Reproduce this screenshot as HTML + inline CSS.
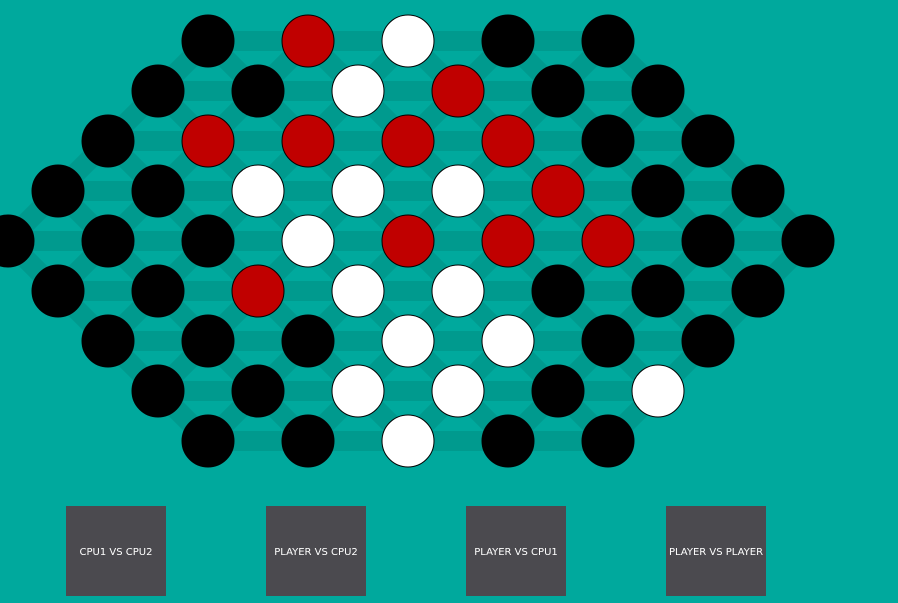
<!DOCTYPE html>
<html><head><meta charset="utf-8"><style>
html,body{margin:0;padding:0;width:898px;height:603px;overflow:hidden;background:#00a99d;font-family:"DejaVu Sans","Liberation Sans",sans-serif}
svg{position:absolute;left:0;top:0}
.b{position:absolute;top:506px;width:100px;height:90px;background:#4b4a4f;color:#fff;font-size:10px;display:flex;align-items:center;justify-content:center;white-space:nowrap;padding-top:2px;box-sizing:border-box}
</style></head><body>
<svg id="s" width="898" height="603"></svg>
<div class="b" style="left:66px">CPU1 VS CPU2</div>
<div class="b" style="left:266px">PLAYER VS CPU2</div>
<div class="b" style="left:466px">PLAYER VS CPU1</div>
<div class="b" style="left:666px">PLAYER VS PLAYER</div>
<script>
var rows=["BRWBB","BBWRBB","BRRRRBB","BBWWWRBB","BBBWRRRBB","BBRWWBBB","BBBWWBB","BBWWBW","BBWBB"];
var cells=[];
rows.forEach(function(r,i){var n=r.length,x0=208-(n-5)*50;for(var j=0;j<n;j++)cells.push({x:x0+j*100,y:41+i*50,c:r[j]});});
var s=document.getElementById("s");
var key={};cells.forEach(function(c){key[c.x+","+c.y]=1;});
var lines="";
cells.forEach(function(c){[[100,0],[50,50],[-50,50]].forEach(function(d){var x=c.x+d[0],y=c.y+d[1];if(key[x+","+y])lines+='<line x1="'+c.x+'" y1="'+c.y+'" x2="'+x+'" y2="'+y+'" stroke="#009a8e" stroke-width="20"/>';});});
var circ="";var col={B:"#000",R:"#c00000",W:"#fff"};
cells.forEach(function(c){circ+='<circle cx="'+c.x+'" cy="'+c.y+'" r="26" fill="'+col[c.c]+'" stroke="#000" stroke-width="1"/>';});
s.innerHTML=lines+circ;
</script>
</body></html>
